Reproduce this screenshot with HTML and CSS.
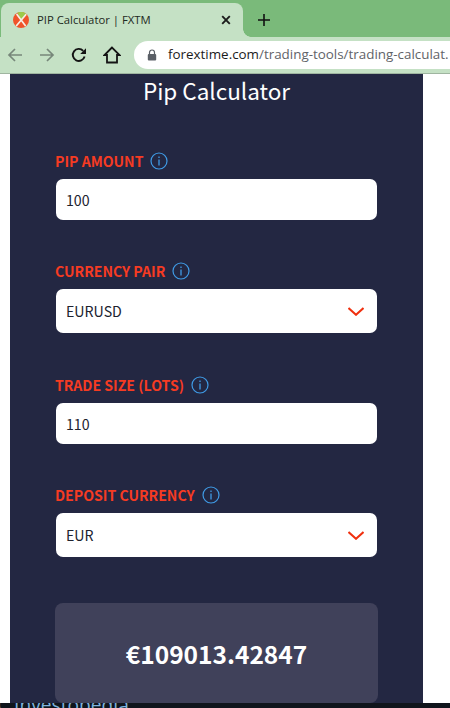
FILE: index.html
```html
<!DOCTYPE html>
<html lang="en">
<head>
<meta charset="utf-8">
<title>PIP Calculator | FXTM</title>
<link rel="stylesheet" href="styles.css">
</head>
<body>
<div class="window">
  <div class="tabstrip">
    <div class="tab">
      <svg class="favicon" viewBox="0 0 16 16" width="16" height="16">
        <circle cx="8" cy="8" r="8" fill="#f0532a"/>
        <path d="M8 8 L4.5 0.8 A8 8 0 0 1 13.5 2.2 Z" fill="#9ccb4a"/>
        <path d="M3.6 2 L12.6 14 M13.2 2.2 L3.2 14" fill="none" stroke="#f6efe6" stroke-width="1.7"/>
      </svg>
      <span class="tab-title">PIP Calculator | FXTM</span>
      <svg class="tab-close" viewBox="0 0 10 10" width="10" height="10"><path d="M1.2 1.2 L8.8 8.8 M8.8 1.2 L1.2 8.8" stroke="#1c1c1c" stroke-width="1.9"/></svg>
    </div>
    <svg class="new-tab" viewBox="0 0 12 12" width="12" height="12"><path d="M6 0 V12 M0 6 H12" stroke="#111" stroke-width="1.6"/></svg>
  </div>
  <div class="toolbar">
    <svg class="nav-icon" viewBox="0 0 16 16" width="16" height="16"><path d="M15 8 H2 M8 2 L2 8 L8 14" fill="none" stroke="#77877a" stroke-width="1.7"/></svg>
    <svg class="nav-icon" viewBox="0 0 16 16" width="16" height="16"><path d="M1 8 H14 M8 2 L14 8 L8 14" fill="none" stroke="#77877a" stroke-width="1.7"/></svg>
    <svg class="nav-icon" viewBox="0 0 16 16" width="16" height="16"><path d="M13.6 9.5 A6 6 0 1 1 12.2 3.8" fill="none" stroke="#141414" stroke-width="1.9"/><path d="M15 1.2 V7 H9.2 Z" fill="#141414"/></svg>
    <svg class="nav-icon home" viewBox="0 0 18 18" width="18" height="18"><path d="M9 1.5 L1.5 9 H4 V16.5 H14 V9 H16.5 Z" fill="none" stroke="#141414" stroke-width="1.8" stroke-linejoin="miter"/></svg>
    <div class="omnibox">
      <svg class="lock" viewBox="0 0 10 12" width="10" height="12"><path d="M2.5 5 V3.5 A2.5 2.5 0 0 1 7.5 3.5 V5" fill="none" stroke="#5a5f66" stroke-width="1.2"/><rect x="0.8" y="5" width="8.4" height="6.6" rx="1" fill="#5a5f66"/></svg>
      <span class="url"><span class="host">forextime.com</span><span class="path">/trading-tools/trading-calculat.</span></span>
    </div>
  </div>
  <main class="page">
    <section class="panel">
      <h1 class="title">Pip Calculator</h1>
      <div class="field field-amount">
        <div class="label"><span>PIP AMOUNT</span><svg class="info" viewBox="0 0 18 18" width="18" height="18"><circle cx="9" cy="9" r="8" fill="none" stroke="#3f9be6" stroke-width="1.2"/><path d="M9 7.5 V13.5 M9 4.5 V6" stroke="#3f9be6" stroke-width="1.3"/></svg></div>
        <div class="control input">100</div>
      </div>
      <div class="field field-select">
        <div class="label"><span>CURRENCY PAIR</span><svg class="info" viewBox="0 0 18 18" width="18" height="18"><circle cx="9" cy="9" r="8" fill="none" stroke="#3f9be6" stroke-width="1.2"/><path d="M9 7.5 V13.5 M9 4.5 V6" stroke="#3f9be6" stroke-width="1.3"/></svg></div>
        <div class="control select"><span>EURUSD</span><svg class="chev" viewBox="0 0 16 9" width="16" height="9"><path d="M0.5 1 L8 7.8 L15.5 1" fill="none" stroke="#f0300f" stroke-width="2"/></svg></div>
      </div>
      <div class="field">
        <div class="label"><span>TRADE SIZE (LOTS)</span><svg class="info" viewBox="0 0 18 18" width="18" height="18"><circle cx="9" cy="9" r="8" fill="none" stroke="#3f9be6" stroke-width="1.2"/><path d="M9 7.5 V13.5 M9 4.5 V6" stroke="#3f9be6" stroke-width="1.3"/></svg></div>
        <div class="control input">110</div>
      </div>
      <div class="field field-select">
        <div class="label"><span>DEPOSIT CURRENCY</span><svg class="info" viewBox="0 0 18 18" width="18" height="18"><circle cx="9" cy="9" r="8" fill="none" stroke="#3f9be6" stroke-width="1.2"/><path d="M9 7.5 V13.5 M9 4.5 V6" stroke="#3f9be6" stroke-width="1.3"/></svg></div>
        <div class="control select"><span>EUR</span><svg class="chev" viewBox="0 0 16 9" width="16" height="9"><path d="M0.5 1 L8 7.8 L15.5 1" fill="none" stroke="#f0300f" stroke-width="2"/></svg></div>
      </div>
      <div class="result">€109013.42847</div>
    </section>
  </main>
  <footer class="taskbar"><span class="behind">C Investopedia</span></footer>
</div>
</body>
</html>
```
FILE: styles.css
```css
* { box-sizing: border-box; }
html, body { margin: 0; padding: 0; }
body { width: 450px; height: 708px; overflow: hidden; background: #fff; font-family: "Noto Sans CJK JP", "Noto Sans", sans-serif; }
.window { display: flex; flex-direction: column; height: 708px; overflow: hidden; }

.tabstrip { display: flex; align-items: center; height: 37px; padding-top: 3px; background: #7aba7a; flex: none; }
.tab { position: relative; display: flex; align-items: center; width: 242px; height: 34px; margin-left: 1px; padding: 0 12px 0 12px; background: #c5e1c5; border-radius: 8px 8px 0 0; }
.tab::after { content: ""; position: absolute; left: 100%; bottom: 0; width: 8px; height: 8px; background: radial-gradient(circle at 100% 0, transparent 7.5px, #c5e1c5 8px); }
.favicon { flex: none; }
.tab-title { flex: 1; margin-left: 8px; font: 11.3px/1 "Open Sans", sans-serif; color: #1d2a22; white-space: nowrap; }
.tab-close { flex: none; }
.new-tab { margin-left: 15px; flex: none; }

.toolbar { display: flex; align-items: center; height: 37px; flex: none; background: #c5e1c5; border-bottom: 1px solid #9fb5a0; padding-left: 7px; }
.nav-icon { flex: none; margin-right: 16px; }
.nav-icon.home { margin-right: 13px; }
.omnibox { display: flex; align-items: center; flex: none; width: 316px; height: 28px; border-radius: 14px 0 0 14px; background: #fff; padding-left: 13px; overflow: hidden; }
.lock { flex: none; }
.url { margin-left: 11px; font: 13.4px/1 "Open Sans", sans-serif; white-space: nowrap; }
.host { color: #1b1b1b; }
.path { color: #5f6368; }

.page { flex: 1; min-height: 0; background: #fff; padding-left: 10px; overflow: hidden; }
.panel { width: 413px; height: 100%; background: #232742; padding: 0 46px; overflow: hidden; }
.title { margin: 0; height: 32px; font-size: 22.5px; line-height: 32px; font-weight: 400; color: #fff; text-align: center; }

.field { margin-top: 41px; }
.field-amount { margin-top: 45px; }
.field-select { padding-bottom: 1px; }
.label { display: flex; align-items: center; gap: 7px; height: 20px; margin-left: -1px; font-size: 14.1px; font-weight: 700; color: #f63b22; }
.info { flex: none; }
.control { display: flex; align-items: center; justify-content: space-between; margin-top: 8px; background: #fff; border-radius: 7px; padding: 0 10px; font-size: 14.2px; color: #20222e; }
.input { height: 41px; }
.select { height: 44px; padding-right: 13px; }
.chev { flex: none; }
.result { display: flex; align-items: center; justify-content: center; height: 100px; margin: 45px -1px 0; border-radius: 8px; background: #40415a; font-size: 24.5px; font-weight: 700; color: #fff; }

.taskbar { height: 5px; flex: none; background: #10151c; overflow: hidden; position: relative; }
.behind { position: absolute; left: -3px; top: -8px; font: 19.2px/1 "Open Sans", sans-serif; color: #7fb2dc; white-space: nowrap; }
```
